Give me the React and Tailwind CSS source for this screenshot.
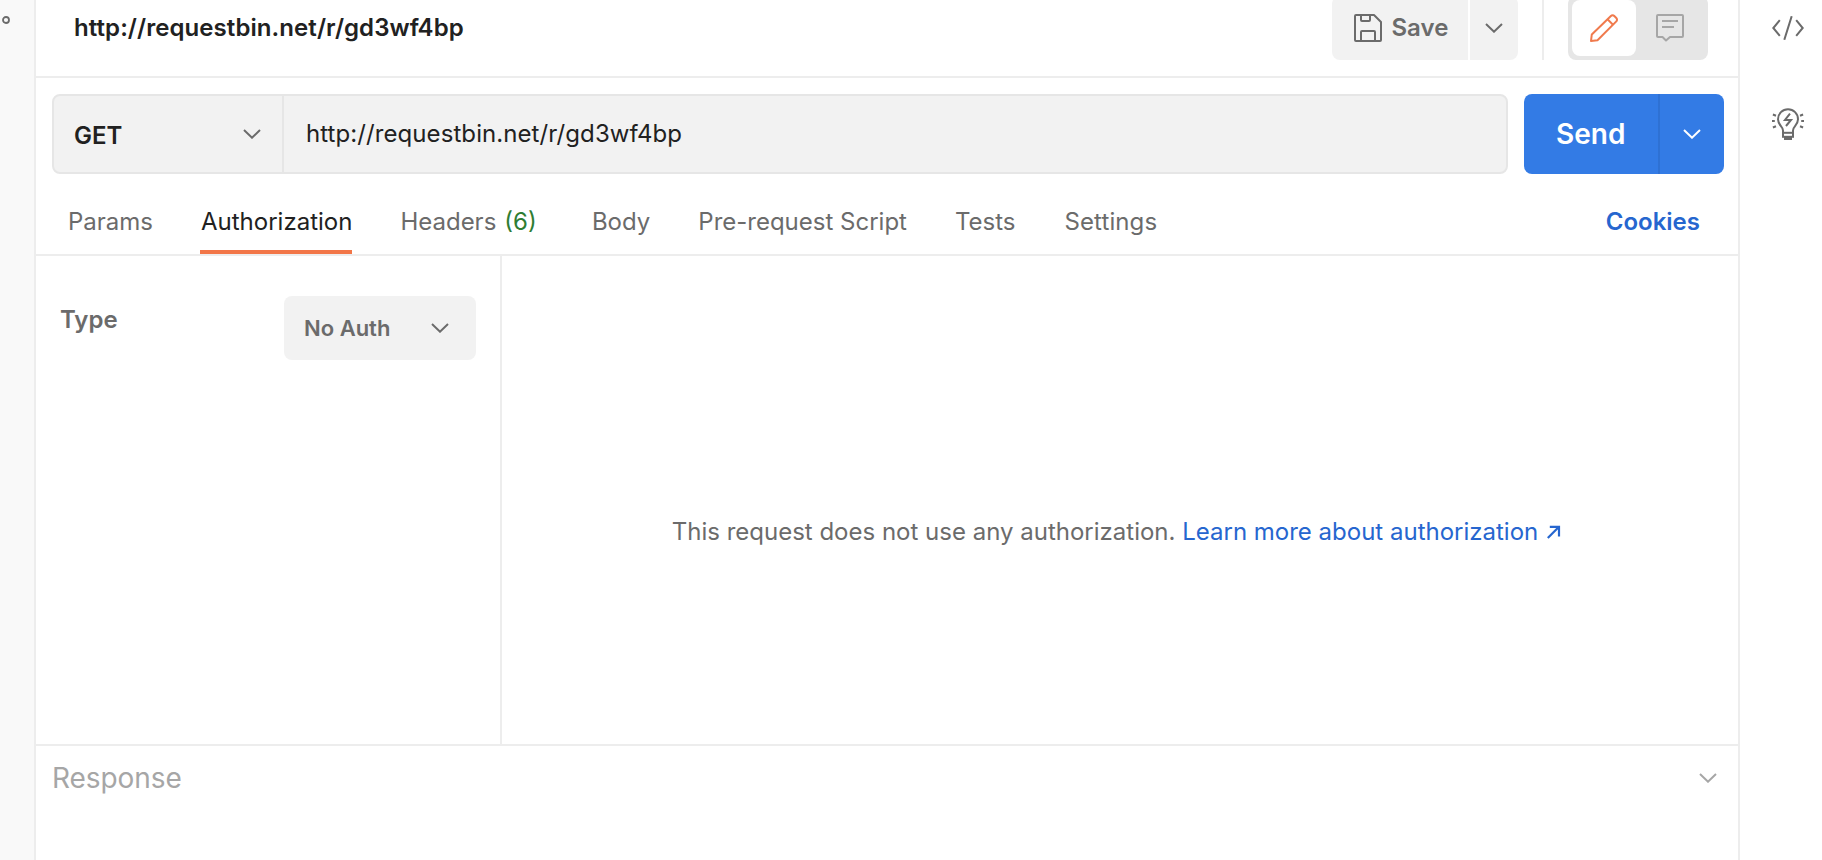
import React from "react";

function Chevron({ className = "" }) {
  return (
    <svg className={`h-[10px] w-[18px] shrink-0 ${className}`} viewBox="0 0 18 10" fill="none" stroke="currentColor" strokeWidth="2">
      <path d="M1 1l8 7.7L17 1" />
    </svg>
  );
}

function SaveIcon() {
  return (
    <svg className="h-7 w-7 shrink-0" viewBox="0 0 28 28" fill="none" stroke="currentColor" strokeWidth="2" strokeLinejoin="round">
      <path d="M2 1h18l7 7v18a1 1 0 0 1-1 1H2a1 1 0 0 1-1-1V2a1 1 0 0 1 1-1z" />
      <path d="M7 1v5a1 1 0 0 0 1 1h7a1 1 0 0 0 1-1V1" />
      <path d="M7 27v-9a1 1 0 0 1 1-1h12a1 1 0 0 1 1 1v9" />
    </svg>
  );
}

function PencilIcon() {
  return (
    <svg className="h-7 w-7" viewBox="0 0 28 28" fill="none" stroke="currentColor" strokeWidth="2" strokeLinejoin="round">
      <path d="M1 27l.8-6.500L20.900 2a2.400 2.400 0 0 1 3.400 0l2 2a2.400 2.400 0 0 1 0 3.400L7.500 26.200z" />
      <path d="M17.500 5.300l5.500 5.500" />
    </svg>
  );
}

function CommentIcon() {
  return (
    <svg className="h-7 w-7" viewBox="0 0 28 28" fill="none" stroke="currentColor" strokeWidth="2" strokeLinejoin="round">
      <path d="M2 1h24a1 1 0 0 1 1 1v20a1 1 0 0 1-1 1H14l-4 3.500L6.500 23H2a1 1 0 0 1-1-1V2a1 1 0 0 1 1-1z" />
      <path d="M6 7h16M6 13h12" />
    </svg>
  );
}

function CodeIcon() {
  return (
    <svg className="h-6 w-8" viewBox="0 0 32 24" fill="none" stroke="currentColor" strokeWidth="2">
      <path d="M7.800 4.200L1.300 12l6.500 7.800M24.200 4.200l6.500 7.800-6.500 7.800M19.700 0.200L12.300 23.800" />
    </svg>
  );
}

function BulbIcon() {
  return (
    <svg className="h-8 w-8" viewBox="0 0 32 32" fill="none" stroke="currentColor" strokeWidth="2">
      <path d="M11 29v-6.500c0-1.500-.7-2.700-1.900-4.100C7.300 16.300 6 14.300 6 11.200a10 10 0 0 1 20 0c0 3.100-1.300 5.100-3.100 7.200-1.200 1.400-1.900 2.600-1.900 4.100V29" />
      <path d="M11 24.800h10" />
      <path d="M12 28h8v4h-8z" fill="currentColor" stroke="none" />
      <path d="M10 28.800h12" />
      <path d="M18 5.700l-5 6.300h6l-5 6" />
      <path d="M.9 6.500L4 7.700M0 13h2.800M.9 19.500L4 18.300M31.100 6.500L28 7.700M32 13h-2.800M31.100 19.500L28 18.300" />
    </svg>
  );
}

function Tab({ label }) {
  return <div className="pt-[29px]">{label}</div>;
}

export default function App() {
  return (
    <div className="flex h-[860px] w-[1822px] overflow-hidden bg-white font-[Inter,sans-serif] text-[24px] leading-[29px] whitespace-nowrap text-[#6b6b6b]">
      <aside className="w-9 shrink-0 border-r-2 border-[#ededed] bg-[#f9f9f9] pt-4 pl-0.5">
        <svg className="h-2 w-2" viewBox="0 0 8 8" fill="none" stroke="currentColor" strokeWidth="1.800">
          <circle cx="4" cy="4" r="3" />
        </svg>
      </aside>

      <main className="flex w-[1702px] shrink-0 flex-col">
        <header className="h-[78px] shrink-0 border-b-2 border-[#ededed]">
          <div className="-mt-1 flex h-16 pr-[30px] pl-[38px]">
            <h1 className="flex-1 pt-[17px] font-semibold tracking-[0.07px] text-[#212121]">http://requestbin.net/r/gd3wf4bp</h1>
            <div className="flex gap-0.5">
              <button className="flex w-[136px] items-start rounded-l-lg bg-[#f2f2f2] pl-[22px] font-semibold">
                <span className="pt-[18px]"><SaveIcon /></span>
                <span className="pt-[17px] pl-[9.500px]">Save</span>
              </button>
              <button className="flex w-12 items-center justify-center rounded-r-lg bg-[#f2f2f2]">
                <Chevron />
              </button>
            </div>
            <div className="mx-6 w-0.5 bg-[#ededed]" />
            <div className="flex w-[140px] rounded-lg bg-[#e6e6e6] p-1">
              <div className="flex w-16 items-center justify-center rounded-lg bg-white text-[#f07a4d]">
                <PencilIcon />
              </div>
              <div className="flex flex-1 items-center justify-center text-[#a6a6a6]">
                <CommentIcon />
              </div>
            </div>
          </div>
        </header>

        <section className="flex h-24 shrink-0 gap-4 pt-4 pr-[14px] pl-4">
          <div className="flex flex-1 rounded-lg border-2 border-[#e6e6e6] bg-[#f2f2f2] text-[#212121]">
            <div className="flex w-[230px] items-start justify-between border-r-2 border-[#e6e6e6] pr-[21px] pl-5">
              <span className="pt-[25px] font-semibold">GET</span>
              <Chevron className="mt-[33px] text-[#6b6b6b]" />
            </div>
            <div className="pt-[23px] pl-[22px] tracking-[0.08px]">http://requestbin.net/r/gd3wf4bp</div>
          </div>
          <div className="flex w-[200px] rounded-lg bg-[#337be5] text-white">
            <div className="w-[136px] border-r-2 border-[#2e71d4] pt-[23px] pl-8 text-[28px] leading-[34px] font-semibold">Send</div>
            <div className="flex flex-1 items-center justify-center">
              <Chevron />
            </div>
          </div>
        </section>

        <nav className="flex h-[82px] shrink-0 border-b-2 border-[#ededed] pt-1 pr-[38px] pl-8">
          <div className="flex flex-1 gap-12">
            <Tab label="Params" />
            <div className="-ml-px border-b-4 border-[#f27648] pt-[29px] pl-px text-[#212121]">Authorization</div>
            <div className="flex w-[143.500px] gap-2 pt-[29px]">
              Headers <span className="text-[#2f7d33]">(6)</span>
            </div>
            <Tab label="Body" />
            <Tab label="Pre-request Script" />
            <Tab label="Tests" />
            <div className="ml-px pt-[29px] tracking-[0.1px]">Settings</div>
          </div>
          <div className="pt-[29px] font-semibold text-[#2666cf]">Cookies</div>
        </nav>

        <section className="flex h-[490px] shrink-0 border-b-2 border-[#ededed]">
          <div className="flex w-[466px] items-start justify-between border-r-2 border-[#ededed] pr-6 pl-6 font-semibold">
            <div className="pt-[49px]">Type</div>
            <div className="mt-10 flex h-16 w-48 items-start justify-between rounded-lg bg-[#f2f2f2] pr-[27px] pl-5">
              <span className="pt-[19px] text-[22px] leading-[26px]">No Auth</span>
              <Chevron className="mt-[27px]" />
            </div>
          </div>
          <div className="flex flex-1 items-start justify-center pt-[261px]">
            <p>
              This request does not use any authorization. <a className="text-[#2666cf]">Learn more about authorization</a>
            </p>
            <svg className="mt-2 ml-[9px] h-[14px] w-[21px] text-[#2666cf]" viewBox="0 0 21 14" fill="none" stroke="currentColor" strokeWidth="2.200">
              <path d="M2.800 1.800H12v9.700M12 1.800L.8 13" />
            </svg>
          </div>
        </section>

        <section className="flex items-start justify-between pt-[15px] pr-[21px] pl-4 text-[28px] leading-[34px] text-[#a6a6a6]">
          <h2 className="tracking-[-0.08px]">Response</h2>
          <Chevron className="mt-3" />
        </section>
      </main>

      <aside className="flex flex-1 flex-col items-start gap-[68px] border-l-2 border-[#ededed] pt-4 pl-8">
        <CodeIcon />
        <BulbIcon />
      </aside>
    </div>
  );
}
